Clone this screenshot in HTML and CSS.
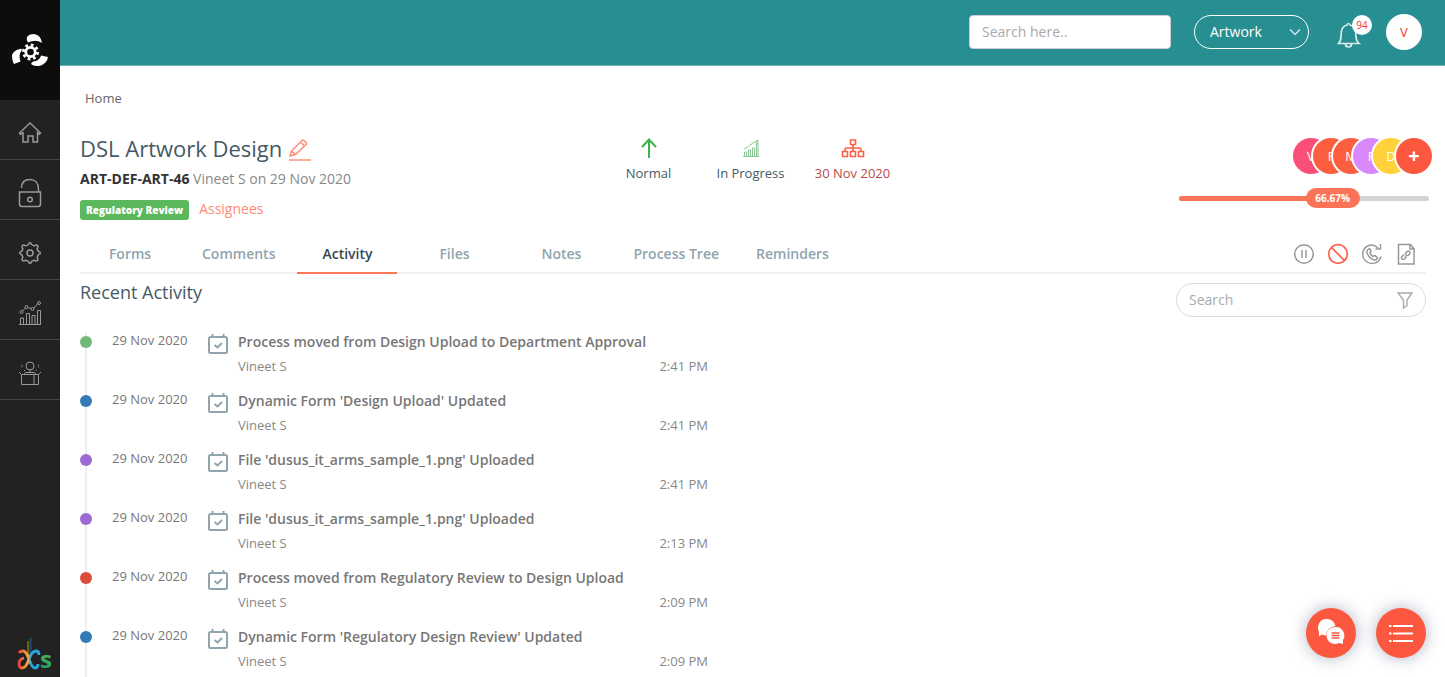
FILE: index.html
```html
<!DOCTYPE html>
<html lang="en">
<head>
    <meta charset="UTF-8">
    <meta name="viewport" content="width=device-width, initial-scale=1.0">
    <title>DSL Artwork Design</title>
    <link rel="stylesheet" href="styles.css">
</head>
<body>
    <!-- shared icon for the activity rows -->
    <svg class="sprite" aria-hidden="true">
        <symbol id="calendar" viewBox="0 0 20 22">
            <path d="M1 5.500a1.500 1.500 0 0 1 1.500-1.500h15a1.500 1.500 0 0 1 1.500 1.500v13a1.500 1.500 0 0 1-1.500 1.500h-15a1.500 1.500 0 0 1-1.500-1.500zM4.500 1v3M15.500 1v3M6.500 12l3 2.500 4.500-4.500" fill="none" stroke="currentColor" stroke-width="2"/>
        </symbol>
    </svg>

    <div class="app">
        <nav class="sidebar" aria-label="Main menu">
            <a class="brand" href="#" aria-label="Dashboard">
                <svg width="36" height="34" viewBox="0 0 36 34">
                    <g fill="#fff">
                        <path d="M15 4Q17 1 22 1Q29 2 30 10Q24 6 16 9.500Q14 7 15 4z"/>
                        <path d="M8 16Q2 17 0 22Q0 28 2 31L8.500 28.500Q6 22 10 17Q9 15 8 16z"/>
                        <path d="M19 31Q20 28 24 28Q28 26 29 22.500L36 24Q35 30 29 32.500Q22 34 19 31z"/>
                    </g>
                    <circle cx="18.500" cy="19" r="4.700" fill="none" stroke="#fff" stroke-width="2.800"/>
                    <circle cx="18.500" cy="19" r="7" fill="none" stroke="#fff" stroke-width="3" stroke-dasharray="2.750 2.750"/>
                </svg>
            </a>
            <a class="side-link" href="#" aria-label="Home">
                <svg width="24" height="24" viewBox="0 0 24 24"><path d="M1.500 12L12 2l10.500 10-1 1.200-2-1.500V21h-4.500v-6h-5v6H5v-9.300l-2.500 1.500z"/></svg>
            </a>
            <a class="side-link" href="#" aria-label="Access">
                <svg width="24" height="30" viewBox="0 0 24 30"><path d="M3.500 10C3.500 4 7 1.500 12 1.500S20.500 5 20.500 11v3M1.500 14h21v12q0 2.500-2.500 2.500H4Q1.500 28.500 1.500 26z"/><circle cx="12" cy="21.500" r="2.300"/></svg>
            </a>
            <a class="side-link" href="#" aria-label="Settings">
                <svg width="24" height="24" viewBox="0 0 24 24"><path d="M10.500 3.500Q11 1.500 12 1.500T13.500 3.500Q15 4.500 16.500 4.800Q18.500 3.500 19.500 4.500T19.200 7.500Q19.500 9 20.500 10.500Q22.500 11 22.500 12T20.500 13.500Q19.500 15 19.200 16.500Q20.500 18.500 19.500 19.500T16.500 19.200Q15 19.500 13.500 20.500Q13 22.500 12 22.500T10.500 20.500Q9 19.500 7.500 19.200Q5.500 20.500 4.500 19.500T4.800 16.500Q4.500 15 3.500 13.500Q1.500 13 1.500 12T3.500 10.500Q4.500 9 4.800 7.500Q3.500 5.500 4.500 4.500T7.500 4.800Q9 4.500 10.500 3.500z"/><circle cx="12" cy="12" r="3"/></svg>
            </a>
            <a class="side-link" href="#" aria-label="Reports">
                <svg class="thin" width="24" height="24" viewBox="0 0 24 24"><path d="M1 23.500h22M2.500 23v-6h3v6M8.500 23V12.500h3V23M14 23v-8.500h3V23M19.500 23V9.500h3V23M4.500 10l3-3M10 6.500l3 1M15.500 7.500l4.500-5"/><circle cx="3.500" cy="11" r="1.500"/><circle cx="8.500" cy="6" r="1.500"/><circle cx="14.500" cy="8" r="1.500"/><circle cx="21" cy="2" r="1.500"/></svg>
            </a>
            <a class="side-link" href="#" aria-label="Products">
                <svg class="thin" width="24" height="24" viewBox="0 0 24 24"><path d="M3.500 13.500h17v10h-17zM3.500 13.500L1 11M20.500 13.500L23 11M16 13.500v10M6 13.500l1.500-2h9l1.500 2M12 9v3M3.500 6h1M20 6h1M6 9.500h1M17.500 9.500h1M3.500 4.500h1M20 4h1"/><circle cx="12" cy="5" r="4"/></svg>
            </a>
            <div class="powered">
                <svg width="40" height="40" viewBox="0 0 40 40" role="img" aria-label="dcs">
                    <defs>
                        <linearGradient id="ribbon"><stop offset="0" stop-color="#e8453c"/><stop offset="0.450" stop-color="#f9b233"/><stop offset="0.600" stop-color="#29a3df"/><stop offset="1" stop-color="#29a3df"/></linearGradient>
                        <linearGradient id="sea" x1="0" y1="0" x2="0" y2="1"><stop offset="0" stop-color="#6db944"/><stop offset="1" stop-color="#0f9d74"/></linearGradient>
                    </defs>
                    <path d="M11 4v14" stroke="#8a7415" stroke-width="1.500"/>
                    <path d="M13.500 1v19" stroke="#1c4e70" stroke-width="2"/>
                    <path d="M22 18Q22 14 19 14Q15 14 12 22Q9 31 5 31Q2 31 2 27Q2 22 7 21M2 16Q3 14 6 14Q9 14 12 22Q15 31 18 31Q21 31 21 27" fill="none" stroke="url(#ribbon)" stroke-width="2.800"/>
                    <text x="23" y="31" class="logo-letter" fill="url(#sea)">s</text>
                </svg>
            </div>
        </nav>

        <div class="page">
            <header class="topbar">
                <input class="top-search" type="search" placeholder="Search here.." aria-label="Search here">
                <div class="module">
                    <select aria-label="Module">
                        <option>Artwork</option>
                    </select>
                    <svg width="12" height="8" viewBox="0 0 12 8"><path d="M1 1.500l5 5 5-5"/></svg>
                </div>
                <button class="bell" type="button" aria-label="Notifications">
                    <svg width="24" height="26" viewBox="0 0 24 26"><path d="M1.500 21.500Q4 19 4 14Q4 4 10 3Q11.500 0 13 3Q19 4 19 14Q19 19 22 21.500zM8.500 22q0 3 3 3t3-3"/></svg>
                    <span class="badge">94</span>
                </button>
                <button class="user" type="button">V</button>
            </header>

            <main class="content">
                <div class="breadcrumb"><a href="#">Home</a></div>

                <section class="summary">
                    <div class="info">
                        <div class="title">
                            <h1>DSL Artwork Design</h1>
                            <button type="button" aria-label="Edit title">
                                <svg width="22" height="22" viewBox="0 0 22 22"><path d="M1 17l1.500-5L13 1.500q1-1 2 0L17 3.500q1 1 0 2L6.500 15.500zM11.500 3l4 4M2.500 12l4 3.500"/><path d="M0 21h22"/></svg>
                            </button>
                        </div>
                        <p class="meta"><strong>ART-DEF-ART-46</strong> <span>Vineet S on 29 Nov 2020</span></p>
                        <div class="stage">
                            <span class="label">Regulatory Review</span>
                            <a href="#">Assignees</a>
                        </div>
                    </div>

                    <div class="stats">
                        <div class="stat">
                            <svg width="20" height="22" viewBox="0 0 20 22" fill="none" stroke="#39b54a" stroke-width="2"><path d="M10 21V3M3 10l7-7.500L17 10"/></svg>
                            <span>Normal</span>
                        </div>
                        <div class="stat">
                            <svg width="20" height="22" viewBox="0 0 20 22" fill="none" stroke="#8cc694" stroke-width="1"><path d="M2 19.500h16M3.500 19v-4h2v4M7.500 19v-6h2v6M11.500 19v-8h2v8M15.500 19V6h1.500v13M3 12Q8 10 9 7.500Q11 8 12 5.500L16.500 4.500M15 3.500h2v2"/></svg>
                            <span>In Progress</span>
                        </div>
                        <div class="stat due">
                            <svg width="24" height="22" viewBox="0 0 24 22" fill="none" stroke="#fb6148" stroke-width="1.600"><path d="M9.500 3h5v4.500h-5zM1.500 14.500h5v5h-5zM9.500 14.500h5v5h-5zM17.500 14.500h5v5h-5zM12 7.500v7M4 14.500V12.500q0-1.500 1.500-1.500h13Q20 11 20 12.500v2"/></svg>
                            <span>30 Nov 2020</span>
                        </div>
                    </div>

                    <div class="team">
                        <div class="avatars">
                            <span class="avatar pink">V</span>
                            <span class="avatar orange">F</span>
                            <span class="avatar orange">M</span>
                            <span class="avatar purple">F</span>
                            <span class="avatar yellow">D</span>
                            <button class="avatar add" type="button" aria-label="Add member">+</button>
                        </div>
                        <div class="progress">
                            <div class="bar" style="width: 66.67%"><span>66.67%</span></div>
                        </div>
                    </div>
                </section>

                <div class="tabs">
                    <nav aria-label="Process">
                        <a href="#">Forms</a>
                        <a href="#">Comments</a>
                        <a class="active" href="#">Activity</a>
                        <a href="#">Files</a>
                        <a href="#">Notes</a>
                        <a href="#">Process Tree</a>
                        <a href="#">Reminders</a>
                    </nav>
                    <div class="actions">
                        <button type="button" aria-label="Pause"><svg width="22" height="22" viewBox="0 0 22 22"><circle cx="11" cy="11" r="9.300"/><path d="M9 7v8M13 7v8"/></svg></button>
                        <button class="stop" type="button" aria-label="Cancel"><svg width="22" height="22" viewBox="0 0 22 22"><circle cx="11" cy="11" r="9.300"/><path d="M4.500 4.500l13 13"/></svg></button>
                        <button type="button" aria-label="Recall"><svg width="22" height="22" viewBox="0 0 22 22"><path d="M17 5Q13 1 8.500 2.200A9.300 9.300 0 1 0 20 13.500M19.500 1v5h-5M7 6.500Q5 8 6.500 11Q9 16 13 17Q15.500 17.500 16.500 15L14 12.500l-2 1Q9.500 12 9 9.500l1-1.500L8.500 5.500z"/></svg></button>
                        <button type="button" aria-label="Attach link"><svg width="22" height="22" viewBox="0 0 22 22"><path d="M3.500 1.500h12l3.500 4V21H3.500zM15 2v4h4M10 11l2-2.500q1.500-1 2.500 0t0 2.500l-2 2M12 11.500l-2 2.500M11.500 14l-2 2q-1.500 1-2.500 0t0-2.500l2-2"/></svg></button>
                    </div>
                </div>

                <section class="recent">
                    <h2>Recent Activity</h2>
                    <div class="filter">
                        <input type="search" placeholder="Search" aria-label="Search activity">
                        <button type="button" aria-label="Filter"><svg width="16" height="18" viewBox="0 0 16 18"><path d="M1 2h14L10 9v5.500L6.500 17V9z"/></svg></button>
                    </div>
                </section>

                <ul class="timeline">
                    <li>
                        <i class="dot green"></i>
                        <time>29 Nov 2020</time>
                        <svg class="event" width="20" height="22"><use href="#calendar"/></svg>
                        <div class="entry">
                            <h3>Process moved from Design Upload to Department Approval</h3>
                            <p><span>Vineet S</span><span>2:41 PM</span></p>
                        </div>
                    </li>
                    <li>
                        <i class="dot blue"></i>
                        <time>29 Nov 2020</time>
                        <svg class="event" width="20" height="22"><use href="#calendar"/></svg>
                        <div class="entry">
                            <h3>Dynamic Form 'Design Upload' Updated</h3>
                            <p><span>Vineet S</span><span>2:41 PM</span></p>
                        </div>
                    </li>
                    <li>
                        <i class="dot violet"></i>
                        <time>29 Nov 2020</time>
                        <svg class="event" width="20" height="22"><use href="#calendar"/></svg>
                        <div class="entry">
                            <h3>File 'dusus_it_arms_sample_1.png' Uploaded</h3>
                            <p><span>Vineet S</span><span>2:41 PM</span></p>
                        </div>
                    </li>
                    <li>
                        <i class="dot violet"></i>
                        <time>29 Nov 2020</time>
                        <svg class="event" width="20" height="22"><use href="#calendar"/></svg>
                        <div class="entry">
                            <h3>File 'dusus_it_arms_sample_1.png' Uploaded</h3>
                            <p><span>Vineet S</span><span>2:13 PM</span></p>
                        </div>
                    </li>
                    <li>
                        <i class="dot red"></i>
                        <time>29 Nov 2020</time>
                        <svg class="event" width="20" height="22"><use href="#calendar"/></svg>
                        <div class="entry">
                            <h3>Process moved from Regulatory Review to Design Upload</h3>
                            <p><span>Vineet S</span><span>2:09 PM</span></p>
                        </div>
                    </li>
                    <li>
                        <i class="dot blue"></i>
                        <time>29 Nov 2020</time>
                        <svg class="event" width="20" height="22"><use href="#calendar"/></svg>
                        <div class="entry">
                            <h3>Dynamic Form 'Regulatory Design Review' Updated</h3>
                            <p><span>Vineet S</span><span>2:09 PM</span></p>
                        </div>
                    </li>
                </ul>
            </main>
        </div>
    </div>

    <div class="floating">
        <button type="button" aria-label="Chat">
            <svg width="28" height="28" viewBox="0 0 28 28">
                <path d="M10 0a8.500 8.500 0 0 1 8.500 7Q10 8 9 16.500Q7 16.500 5.500 15.500L2 17V12.500A8.500 8.500 0 0 1 10 0z" fill="#fff"/>
                <path d="M18.500 8a8.500 8.500 0 0 1 7.500 13V25L22 24A8.500 8.500 0 1 1 18.500 8z" fill="#fff"/>
                <path d="M14.500 14h8M14.500 16.500h8M14.500 19h8" stroke="#fb583f" stroke-width="1.300"/>
            </svg>
        </button>
        <button type="button" aria-label="Menu">
            <svg width="26" height="20" viewBox="0 0 26 20"><path d="M1 3h2.500M5 3h20M1 10.500h2.500M5 10.500h20M1 18h2.500M5 18h20" stroke="#fff" stroke-width="2"/></svg>
        </button>
    </div>
</body>
</html>
```
FILE: styles.css
```css
* {
    margin: 0;
    padding: 0;
    box-sizing: border-box;
}

body {
    font-family: "Open Sans", sans-serif;
    font-size: 13px;
    line-height: 20px;
    color: #777;
    background: #fff;
}

a {
    color: inherit;
    text-decoration: none;
}

button,
input,
select {
    font: inherit;
    outline: none;
}

button {
    background: none;
    border: none;
    cursor: pointer;
}

svg {
    display: block;
    flex: none;
}

.sprite {
    position: absolute;
    width: 0;
    height: 0;
}

.app {
    display: flex;
    height: 100vh;
    overflow: hidden;
}

/* sidebar */
.sidebar {
    display: flex;
    flex-direction: column;
    flex: none;
    width: 60px;
    background: #222;
}

.brand {
    display: flex;
    align-items: center;
    justify-content: center;
    height: 100px;
    background: #0d0d0d;
}

.side-link {
    display: flex;
    align-items: center;
    justify-content: center;
    height: 60px;
    padding-top: 6px;
    border-bottom: 1px solid #444;
}

.side-link svg {
    fill: none;
    stroke: #999;
    stroke-width: 1.5;
}

.side-link .thin {
    stroke-width: 1;
}

.powered {
    margin-top: auto;
    padding-left: 17px;
}

.logo-letter {
    font: bold 24px "Open Sans", sans-serif;
}

/* top bar */
.page {
    display: flex;
    flex-direction: column;
    flex: 1;
    min-width: 0;
}

.topbar {
    display: flex;
    align-items: center;
    justify-content: flex-end;
    flex: none;
    height: 66px;
    padding: 0 23px 1px;
    background: #278e92;
    border-bottom: 1px solid #6cb3b6;
}

.top-search {
    width: 202px;
    height: 34px;
    padding: 0 12px 2px;
    font-size: 14px;
    background: #fff;
    border: 1px solid #ccc;
    border-radius: 4px;
    margin-right: 23px;
}

::placeholder {
    color: #aaa;
    opacity: 1;
}

.module {
    position: relative;
    margin-right: 28px;
}

.module select {
    width: 115px;
    height: 34px;
    padding: 0 15px;
    font-size: 14px;
    color: #fff;
    background: transparent;
    border: 1px solid #fff;
    border-radius: 17px;
    appearance: none;
}

.module svg {
    position: absolute;
    right: 8px;
    top: 13px;
    fill: none;
    stroke: #d4e8e9;
    stroke-width: 1.5;
    pointer-events: none;
}

.bell {
    position: relative;
    margin-right: 25px;
    padding-top: 6px;
}

.bell svg {
    fill: none;
    stroke: #d9ecec;
    stroke-width: 1.7;
}

.badge {
    position: absolute;
    top: -1px;
    left: 15px;
    width: 20px;
    height: 20px;
    font-size: 10px;
    color: #f33;
    background: #fff;
    border-radius: 50%;
}

.user {
    width: 36px;
    height: 36px;
    color: #f3382c;
    background: #fff;
    border-radius: 50%;
}

/* page content */
.content {
    flex: 1;
    min-height: 0;
    padding: 22px 15px 0 20px;
    overflow: hidden;
}

.breadcrumb {
    padding-left: 5px;
    color: #666;
}

.summary {
    display: grid;
    grid-template-columns: minmax(0, 1fr) 306px 39%;
    margin-top: 25px;
}

.title {
    display: flex;
    align-items: center;
    gap: 7px;
    height: 30px;
}

.title button {
    padding-top: 3px;
}

h1 {
    font-size: 22px;
    font-weight: 400;
    line-height: 30px;
    color: #455a64;
}

.title svg {
    fill: none;
    stroke: #ff8f7a;
    stroke-width: 1.5;
}

.meta {
    margin-top: 6px;
    font-size: 14px;
    color: #888;
}

.meta strong {
    color: #333;
}

.stage {
    display: flex;
    align-items: center;
    gap: 10px;
    margin-top: 9px;
}

.stage .label {
    padding: 0 6px;
    margin-top: 2px;
    font-size: 10px;
    font-weight: 800;
    color: #fff;
    background: #5cb85c;
    border-radius: 3px;
}

.stage a {
    font-size: 14px;
    color: #ff8a73;
}

.stats {
    display: grid;
    grid-template-columns: repeat(3, 1fr);
    align-items: start;
}

.stat {
    display: flex;
    flex-direction: column;
    align-items: center;
    gap: 4px;
    padding-top: 4px;
    color: #455a64;
}

.stat.due {
    color: #b94a48;
}

.team {
    display: flex;
    flex-direction: column;
    align-items: flex-end;
}

.avatars {
    display: flex;
    margin: 5px -2px 0 0;
}

.avatar {
    width: 36px;
    height: 36px;
    margin-left: -16px;
    line-height: 36px;
    text-align: center;
    color: #fff;
    border-radius: 50%;
    box-shadow: 0 0 0 2px #fff;
}

.pink { background: #fa5078; }
.orange { background: #fb5f40; }
.purple { background: #d987fb; }
.yellow { background: #ffd23c; }

.add {
    margin-left: -13px;
    font-size: 20px;
    font-weight: 700;
    background: #fb583f;
}

.progress {
    width: 250px;
    height: 5px;
    margin: 22px 1px 0 0;
    background: #d4d4d4;
    border-radius: 3px;
}

.bar {
    position: relative;
    height: 5px;
    background: #fc7458;
    border-radius: 3px;
}

.bar span {
    position: absolute;
    right: -14px;
    top: -8px;
    width: 54px;
    font-size: 10px;
    font-weight: 700;
    text-align: center;
    color: #fff;
    background: #fc7458;
    border-radius: 10px;
}

/* tabs */
.tabs {
    display: flex;
    justify-content: space-between;
    height: 38px;
    margin: 16px 4px 0 0;
    border-bottom: 2px solid #f2f2f2;
}

.tabs nav {
    display: flex;
    gap: 7px;
}

.tabs a {
    min-width: 100px;
    height: 38px;
    padding: 8px 15px;
    font-size: 14px;
    font-weight: 600;
    text-align: center;
    color: #90a4ae;
}

.tabs .active {
    color: #37474f;
    border-bottom: 2px solid #ff7658;
}

.actions {
    display: flex;
    align-items: center;
    gap: 12px;
    padding-right: 9px;
}

.actions svg {
    fill: none;
    stroke: #999;
    stroke-width: 1.5;
}

.actions .stop svg {
    stroke: #fb6148;
    stroke-width: 1.7;
}

.recent {
    display: flex;
    justify-content: space-between;
    margin: 9px 4px 0 0;
}

h2 {
    font-size: 18px;
    font-weight: 400;
    line-height: 18px;
    color: #455a64;
}

.filter {
    display: flex;
    align-items: center;
    width: 250px;
    height: 34px;
    padding: 0 12px;
    border: 1px solid #ddd;
    border-radius: 17px;
}

.filter input {
    flex: 1;
    min-width: 0;
    font-size: 14px;
    background: none;
    border: none;
}

.filter svg {
    fill: none;
    stroke: #aaa;
    stroke-width: 1.4;
}

/* timeline */
.timeline {
    list-style: none;
    margin-top: 16px;
    background: linear-gradient(#eee, #eee) 5px 0 / 2px 100% no-repeat;
}

.timeline li {
    display: flex;
    align-items: flex-start;
    height: 59px;
}

.dot {
    width: 12px;
    height: 12px;
    margin: 3px 20px 0 0;
    border-radius: 50%;
}

.green { background: #72b879; }
.blue { background: #337ab7; }
.violet { background: #9c6ad3; }
.red { background: #dd4b39; }

.timeline time {
    width: 96px;
    line-height: 14px;
}

.event {
    color: #90a4ae;
}

.entry {
    width: 470px;
    margin-left: 10px;
}

h3 {
    font-size: 14px;
    font-weight: 600;
    line-height: 18px;
}

.entry p {
    display: flex;
    justify-content: space-between;
    margin-top: 5px;
    color: #888;
}

/* floating buttons */
.floating {
    position: fixed;
    right: 19px;
    bottom: 19px;
    display: flex;
    gap: 20px;
}

.floating button {
    display: flex;
    align-items: center;
    justify-content: center;
    width: 50px;
    height: 50px;
    background: #fb583f;
    border-radius: 50%;
    box-shadow: 0 0 16px rgba(60, 70, 110, 0.4);
}
```
